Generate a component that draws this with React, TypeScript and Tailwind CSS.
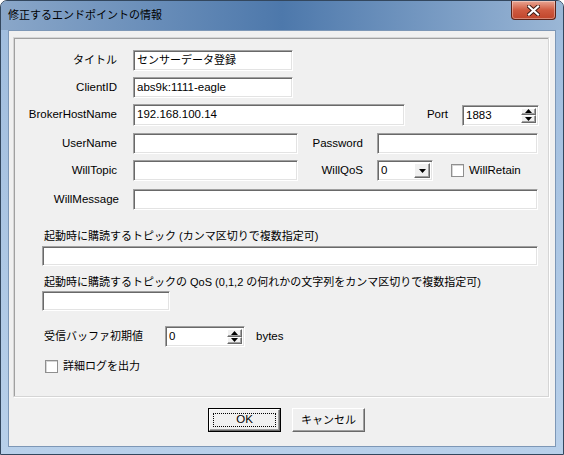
import type { ReactNode } from 'react';

const JP = 'font-["Liberation_Sans","Noto_Sans_CJK_JP",sans-serif]';

// sunken classic text field
function TextBox({ w, h = 21, value, className = '' }: { w: number; h?: number; value?: string; className?: string }) {
  return (
    <div
      className={`flex items-center bg-white border border-t-[#a0a0a0] border-l-[#a0a0a0] border-b-white border-r-white shadow-[inset_1px_1px_0_#696969,inset_-1px_-1px_0_#e3e3e3] pl-[3px] text-[11.5px] text-black whitespace-nowrap overflow-hidden ${className}`}
      style={{ width: w, height: h }}
    >
      {value}
    </div>
  );
}

function Raised({ children, className = '' }: { children?: ReactNode; className?: string }) {
  return (
    <div
      className={`flex items-center justify-center bg-[#f0f0f0] border border-t-white border-l-white border-b-[#696969] border-r-[#696969] shadow-[inset_-1px_-1px_0_#a0a0a0] ${className}`}
    >
      {children}
    </div>
  );
}

function Tri({ up }: { up?: boolean }) {
  return (
    <svg width="7" height="4" viewBox="0 0 7 4" className="block">
      {up ? <path d="M0 4 L3.5 0 L7 4 Z" fill="#000" /> : <path d="M0 0 L7 0 L3.5 4 Z" fill="#000" />}
    </svg>
  );
}

function SpinBox({ w, value }: { w: number; value: string }) {
  return (
    <div
      className="flex items-stretch bg-white border border-t-[#a0a0a0] border-l-[#a0a0a0] border-b-white border-r-white shadow-[inset_1px_1px_0_#696969,inset_-1px_-1px_0_#e3e3e3] p-[2px]"
      style={{ width: w, height: 21 }}
    >
      <div className="flex-1 pl-[1px] text-[11.5px] leading-[15px]">{value}</div>
      <div className="flex flex-col w-[15px]">
        <Raised className="flex-1">
          <Tri up />
        </Raised>
        <Raised className="flex-1">
          <Tri />
        </Raised>
      </div>
    </div>
  );
}

function ComboBox({ w, value }: { w: number; value: string }) {
  return (
    <div
      className="flex items-stretch bg-white border border-t-[#a0a0a0] border-l-[#a0a0a0] border-b-white border-r-white shadow-[inset_1px_1px_0_#696969,inset_-1px_-1px_0_#e3e3e3] p-[2px]"
      style={{ width: w, height: 21 }}
    >
      <div className="flex-1 pl-[1px] text-[11.5px] leading-[15px]">{value}</div>
      <Raised className="w-[16px]">
        <Tri />
      </Raised>
    </div>
  );
}

function CheckBox() {
  return <div className="w-[13px] h-[13px] bg-white border border-[#8f8f8f] shadow-[inset_1px_1px_0_#d6d6d6] shrink-0" />;
}

function Label({ w, children, jp }: { w: number; children: ReactNode; jp?: boolean }) {
  return (
    <div className={`text-right shrink-0 ${jp ? 'text-[11px]' : 'text-[11.5px]'}`} style={{ width: w }}>
      {children}
    </div>
  );
}

function Button({ children, isDefault }: { children: ReactNode; isDefault?: boolean }) {
  return (
    <div className={`w-[73px] h-[24px] ${isDefault ? 'border border-black' : ''}`}>
      <div className="w-full h-full flex items-center justify-center bg-[#f0f0f0] border border-t-white border-l-white border-b-[#696969] border-r-[#696969] shadow-[inset_-1px_-1px_0_#a0a0a0]">
        <div
          className={`flex items-center justify-center w-[calc(100%-6px)] h-[calc(100%-6px)] ${isDefault ? 'border border-dotted border-black' : ''}`}
        >
          {children}
        </div>
      </div>
    </div>
  );
}

export default function App() {
  return (
    <div className={`w-[564px] h-[455px] ${JP} text-black`}>
      <div className="w-full h-full flex flex-col rounded-t-[7px] overflow-hidden border border-[#33475e] bg-gradient-to-b from-[#9fbcdd] to-[#b8d0ea]">
        {/* title bar */}
        <div className="h-[29px] flex items-start bg-gradient-to-r from-[#8aa7c9] via-[#4d78ab] to-[#9bb7d6]">
          <div className="pl-[7px] pt-[6px] text-[11px] leading-[16px] text-black flex-1">修正するエンドポイントの情報</div>
          <div className="w-[45px] h-[19px] mr-[7px] rounded-b-[4px] border border-t-0 border-[#5b2217] bg-gradient-to-b from-[#e8a593] via-[#cf5a40] to-[#c0452b] flex items-center justify-center shadow-[inset_0_0_0_1px_rgba(255,255,255,0.35)]">
            <svg width="13" height="11" viewBox="0 0 13 11">
              <path d="M2 1.5 L11 9.5 M11 1.5 L2 9.5" stroke="#3b1a14" strokeWidth="4" strokeLinecap="square" />
              <path d="M2 1.5 L11 9.5 M11 1.5 L2 9.5" stroke="#ffffff" strokeWidth="2.2" strokeLinecap="square" />
            </svg>
          </div>
        </div>

        {/* client area */}
        <div className="mx-[7px] h-[417px] bg-[#f0f0f0] border border-[#7d97b6] flex flex-col">
          {/* group box */}
          <div className="mt-[6px] ml-[4px] w-[536px] h-[360px] border border-[#d5d5d5] shadow-[inset_1px_1px_0_#a0a0a0,1px_1px_0_#ffffff] flex flex-col pl-[1px]">
            <div className="mt-[12px] flex items-center h-[21px]">
              <Label w={102} jp>タイトル</Label>
              <TextBox w={160} value="センサーデータ登録" className="ml-[16px] !text-[11px]" />
            </div>
            <div className="mt-[6px] flex items-center h-[21px]">
              <Label w={102}>ClientID</Label>
              <TextBox w={160} value="abs9k:1111-eagle" className="ml-[16px]" />
            </div>
            <div className="mt-[6px] flex items-center h-[22px]">
              <Label w={102}>BrokerHostName</Label>
              <TextBox w={272} h={22} value="192.168.100.14" className="ml-[16px]" />
              <Label w={43}>Port</Label>
              <div className="ml-[14px]">
                <SpinBox w={77} value="1883" />
              </div>
            </div>
            <div className="mt-[7px] flex items-center h-[21px]">
              <Label w={102}>UserName</Label>
              <TextBox w={165} className="ml-[16px]" />
              <Label w={65}>Password</Label>
              <TextBox w={161} className="ml-[14px]" />
            </div>
            <div className="mt-[6px] flex items-center h-[21px]">
              <Label w={102}>WillTopic</Label>
              <TextBox w={165} className="ml-[16px]" />
              <Label w={65}>WillQoS</Label>
              <div className="ml-[14px]">
                <ComboBox w={56} value="0" />
              </div>
              <div className="ml-[18px]">
                <CheckBox />
              </div>
              <div className="ml-[5px] text-[11.5px]">WillRetain</div>
            </div>
            <div className="mt-[8px] flex items-center h-[21px]">
              <Label w={104}>WillMessage</Label>
              <TextBox w={405} className="ml-[14px]" />
            </div>

            <div className="mt-[19px] ml-[29px] text-[11px] leading-[14px]">
              起動時に購読するトピック (カンマ区切りで複数指定可)
            </div>
            <div className="mt-[3px] ml-[27px]">
              <TextBox w={496} h={20} />
            </div>
            <div className="mt-[9px] ml-[29px] text-[11px] leading-[14px]">
              起動時に購読するトピックの QoS (0,1,2 の何れかの文字列をカンマ区切りで複数指定可)
            </div>
            <div className="mt-[2px] ml-[27px]">
              <TextBox w={128} h={20} />
            </div>

            <div className="mt-[15px] ml-[29px] flex items-center h-[21px]">
              <div className="w-[121px] text-[11px]">受信バッファ初期値</div>
              <SpinBox w={80} value="0" />
              <div className="ml-[11px] text-[11.5px]">bytes</div>
            </div>
            <div className="mt-[12px] ml-[30px] flex items-center h-[14px]">
              <CheckBox />
              <div className="ml-[5px] text-[11px]">詳細ログを出力</div>
            </div>
          </div>

          {/* buttons */}
          <div className="mt-[11px] ml-[199px] flex gap-[11px] text-[11.5px]">
            <Button isDefault>OK</Button>
            <Button>
              <span className="text-[11px]">キャンセル</span>
            </Button>
          </div>
        </div>
      </div>
    </div>
  );
}
